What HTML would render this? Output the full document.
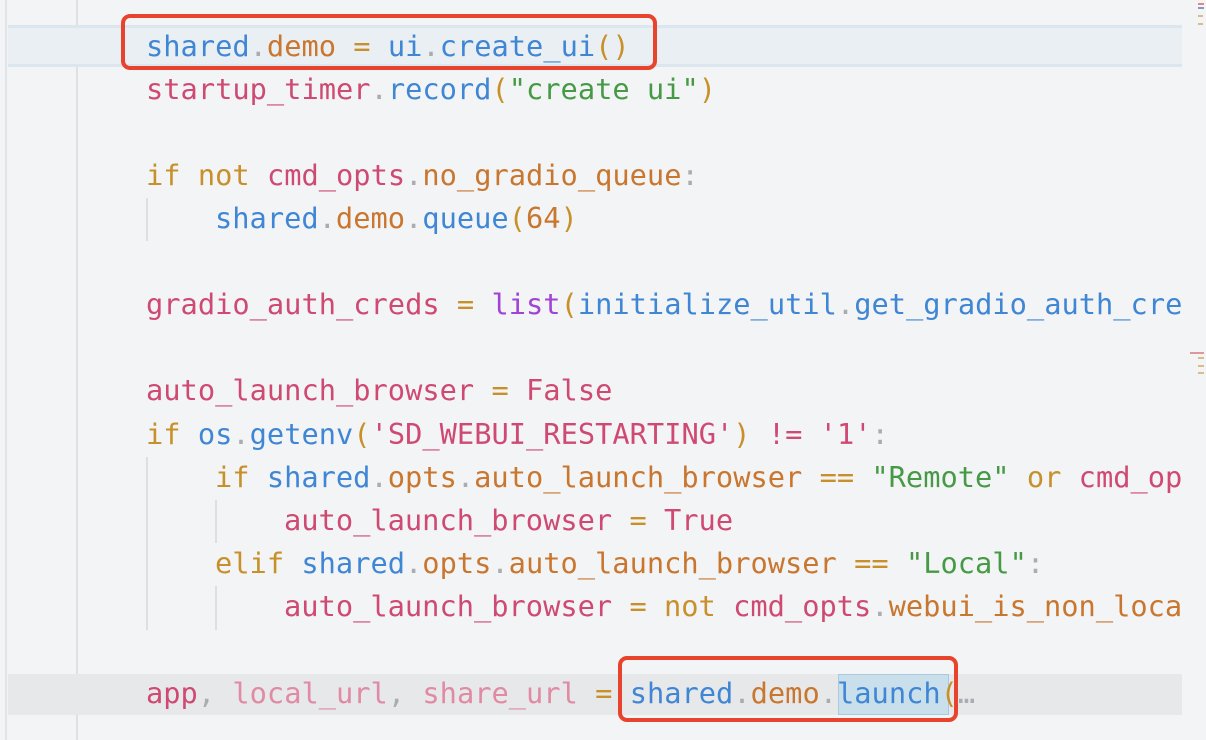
<!DOCTYPE html>
<html><head><meta charset="utf-8"><style>
html,body{margin:0;padding:0;}
body{width:1206px;height:740px;background:#f3f4f6;position:relative;overflow:hidden;font-family:"DejaVu Sans Mono","Liberation Mono",monospace;}
.l{position:absolute;left:146px;height:43px;line-height:43px;font-size:28.7px;white-space:pre;color:#333;}
.b{color:#3f86d4}.o{color:#c9762f}.p{color:#cf4a72}.k{color:#c8902a}.g{color:#479a45}.d{color:#a9acb0}.y{color:#c8902a}.v{color:#a044d6}.lp{color:#e08aa4}
.guide{position:absolute;width:2px;background:#dcdfe3;}
.box{position:absolute;border:4px solid #e8432d;border-radius:9px;box-sizing:border-box;}
</style></head><body>
<div class="guide" style="left:5px;top:0;height:740px;background:#e1e4e8"></div>
<div class="guide" style="left:76px;top:0;height:740px;background:#dde0e4"></div>
<div style="position:absolute;left:8px;top:25px;width:1174px;height:42px;background:#eaeff3;border-top:3px solid #dbe6ee;border-bottom:3px solid #dbe6ee;box-sizing:border-box"></div>
<div style="position:absolute;left:8px;top:674px;width:1174px;height:41px;background:#e7e8ea"></div>
<div style="position:absolute;left:838px;top:674px;width:111px;height:41px;background:#c9dfec;border:1px solid #a9cadd;box-sizing:border-box"></div>
<div class="guide" style="left:146px;top:198px;height:43px"></div>
<div class="guide" style="left:146px;top:457px;height:173px"></div>
<div class="guide" style="left:215px;top:500px;height:43px"></div>
<div class="guide" style="left:215px;top:586px;height:44px"></div>
<div style="position:absolute;left:1190px;top:115px;width:16px;height:3px;background:#111"></div>

<div class="l" style="top:25px"><span class="b">shared</span><span class="d">.</span><span class="o">demo</span> <span class="y">=</span> <span class="b">ui</span><span class="d">.</span><span class="b">create_ui</span><span class="y">()</span></div>
<div class="l" style="top:68px"><span class="p">startup_timer</span><span class="d">.</span><span class="b">record</span><span class="y">(</span><span class="g">"create ui"</span><span class="y">)</span></div>
<div class="l" style="top:154px"><span class="k">if</span> <span class="k">not</span> <span class="p">cmd_opts</span><span class="d">.</span><span class="o">no_gradio_queue</span><span class="d">:</span></div>
<div class="l" style="top:197px;left:215px"><span class="b">shared</span><span class="d">.</span><span class="o">demo</span><span class="d">.</span><span class="b">queue</span><span class="y">(</span><span class="o">64</span><span class="y">)</span></div>
<div class="l" style="top:283px"><span class="p">gradio_auth_creds</span> <span class="y">=</span> <span class="v">list</span><span class="y">(</span><span class="b">initialize_util</span><span class="d">.</span><span class="b">get_gradio_auth_cre</span></div>
<div class="l" style="top:369px"><span class="p">auto_launch_browser</span> <span class="y">=</span> <span class="p">False</span></div>
<div class="l" style="top:413px"><span class="k">if</span> <span class="b">os</span><span class="d">.</span><span class="b">getenv</span><span class="y">(</span><span class="p">'SD_WEBUI_RESTARTING'</span><span class="y">)</span> <span class="p">!=</span> <span class="p">'1'</span><span class="d">:</span></div>
<div class="l" style="top:456px;left:215px"><span class="k">if</span> <span class="b">shared</span><span class="d">.</span><span class="o">opts</span><span class="d">.</span><span class="o">auto_launch_browser</span> <span class="y">==</span> <span class="g">"Remote"</span> <span class="k">or</span> <span class="p">cmd_op</span></div>
<div class="l" style="top:499px;left:284px"><span class="p">auto_launch_browser</span> <span class="y">=</span> <span class="p">True</span></div>
<div class="l" style="top:542px;left:215px"><span class="k">elif</span> <span class="b">shared</span><span class="d">.</span><span class="o">opts</span><span class="d">.</span><span class="o">auto_launch_browser</span> <span class="y">==</span> <span class="g">"Local"</span><span class="d">:</span></div>
<div class="l" style="top:585px;left:284px"><span class="p">auto_launch_browser</span> <span class="y">=</span> <span class="k">not</span> <span class="p">cmd_opts</span><span class="d">.</span><span class="o">webui_is_non_loca</span></div>
<div class="l" style="top:672px"><span class="p">app</span><span class="d">,</span> <span class="lp">local_url</span><span class="d">,</span> <span class="lp">share_url</span> <span class="y">=</span> <span class="b">shared</span><span class="d">.</span><span class="o">demo</span><span class="d">.</span><span class="b">launch</span><span class="y">(</span><span class="d">…</span></div>
<div style="position:absolute;left:1182px;top:0;width:24px;height:740px;background:#f3f4f6"></div>
<div style="position:absolute;left:1198px;top:3px;width:6px;height:2px;background:#d88"></div>
<div style="position:absolute;left:1198px;top:7px;width:6px;height:2px;background:#89b"></div>
<div style="position:absolute;left:1198px;top:15px;width:5px;height:2px;background:#db8"></div>
<div style="position:absolute;left:1198px;top:23px;width:5px;height:2px;background:#db8"></div>
<div style="position:absolute;left:1190px;top:352px;width:14px;height:2px;background:#d99"></div>
<div style="position:absolute;left:1198px;top:357px;width:6px;height:2px;background:#db8"></div>
<div style="position:absolute;left:1198px;top:365px;width:6px;height:2px;background:#db8"></div>
<div style="position:absolute;left:1198px;top:372px;width:6px;height:2px;background:#db8"></div>

<div class="box" style="left:121px;top:14px;width:536px;height:56px"></div>
<div class="box" style="left:618px;top:656px;width:340px;height:66px"></div>
</body></html>
